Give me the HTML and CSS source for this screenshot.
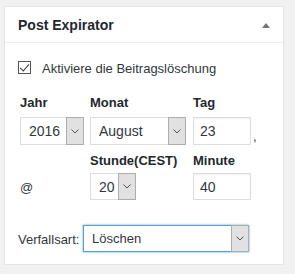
FILE: index.html
```html
<!DOCTYPE html>
<html lang="de">
<head>
  <meta charset="UTF-8" />
  <title>Post Expirator</title>
  <link rel="stylesheet" href="styles.css">
</head>
<body>

  <div class="postbox">
    <div class="hndle">
      <h2>Post Expirator</h2>
      <span class="toggle"></span>
    </div>

    <div class="inside">
      <label class="check-row">
        <input type="checkbox" checked />
        <span>Aktiviere die Beitragslöschung</span>
      </label>

      <div class="dates">
        <div class="th">Jahr</div>
        <div class="th">Monat</div>
        <div class="th">Tag</div>
        <div></div>

        <div class="select w-year">
          <span class="value">2016</span>
          <span class="caret"><svg width="8" height="5" viewBox="0 0 8 5"><path d="M0.5 0.5 L4 4 L7.5 0.5" fill="none" stroke="#555" stroke-width="1"/></svg></span>
        </div>
        <div class="select w-month">
          <span class="value">August</span>
          <span class="caret"><svg width="8" height="5" viewBox="0 0 8 5"><path d="M0.5 0.5 L4 4 L7.5 0.5" fill="none" stroke="#555" stroke-width="1"/></svg></span>
        </div>
        <input class="text" type="text" value="23" spellcheck="false" />
        <div class="comma">,</div>

        <div></div>
        <div class="th th-2">Stunde(CEST)</div>
        <div class="th th-2">Minute</div>
        <div></div>

        <div class="at">@</div>
        <div class="select w-hour row-4">
          <span class="value">20</span>
          <span class="caret"><svg width="8" height="5" viewBox="0 0 8 5"><path d="M0.5 0.5 L4 4 L7.5 0.5" fill="none" stroke="#555" stroke-width="1"/></svg></span>
        </div>
        <input class="text row-4" type="text" value="40" spellcheck="false" />
        <div></div>
      </div>

      <div class="type-row">
        <span class="type-label">Verfallsart:</span>
        <div class="select w-type focus">
          <span class="value">Löschen</span>
          <span class="caret"><svg width="8" height="5" viewBox="0 0 8 5"><path d="M0.5 0.5 L4 4 L7.5 0.5" fill="none" stroke="#555" stroke-width="1"/></svg></span>
        </div>
      </div>
    </div>
  </div>

</body>
</html>
```

FILE: styles.css
```css
body {
  margin: 0;
  padding: 6px 0 0 4px;
  background: #f1f1f1;
  font-family: "Liberation Sans", Arial, sans-serif;
  font-size: 13px;
  color: #23282d;
}

.postbox {
  width: 278px;
  background: #fff;
  border: 1px solid #e5e5e5;
  box-shadow: 0 1px 1px rgba(0,0,0,0.04);
}

.hndle {
  display: flex;
  align-items: center;
  justify-content: space-between;
  height: 35px;
  padding: 0 13px 0 13px;
  border-bottom: 1px solid #eee;
}

.hndle h2 {
  margin: 0;
  font-size: 14px;
  font-weight: bold;
  line-height: 35px;
  padding-top: 1px;
}

.toggle {
  width: 0;
  height: 0;
  margin-top: 1px;
  border-left: 4px solid transparent;
  border-right: 4px solid transparent;
  border-bottom: 5px solid #72777c;
}

.inside {
  padding: 18px 0 12px 13px;
}

.check-row {
  display: flex;
  align-items: center;
  height: 13px;
}

.check-row input {
  appearance: none;
  margin: 0 11px 0 0;
  width: 13px;
  height: 13px;
  border: 1px solid #555;
  background: #fff;
  position: relative;
}

.check-row input:checked::after {
  content: "";
  position: absolute;
  left: 3px;
  top: 0px;
  width: 4px;
  height: 8px;
  border-right: 1px solid #333;
  border-bottom: 1px solid #333;
  transform: rotate(40deg);
}

.check-row span {
  line-height: 13px;
  padding-top: 2px;
  color: #32373c;
}

.dates {
  display: grid;
  grid-template-columns: 64px 97px 58px auto;
  column-gap: 6px;
  margin: 21px 0 0 2px;
}

.th {
  font-weight: bold;
  line-height: 16px;
  margin-bottom: 6px;
}

.th-2 {
  margin-top: 8px;
  margin-bottom: 4px;
}

.select {
  position: relative;
  box-sizing: border-box;
  height: 28px;
  border: 1px solid #ddd;
  background: #fff;
  display: flex;
  align-items: center;
  font-size: 14px;
  color: #32373c;
}

.select .value {
  padding-left: 8px;
}

.caret {
  position: absolute;
  top: -1px;
  right: -1px;
  bottom: -1px;
  width: 18px;
  box-sizing: border-box;
  background: #e1e1e1;
  border: 1px solid #adadad;
  display: flex;
  align-items: center;
  justify-content: center;
}

.w-year { width: 64px; }
.w-month { width: 96px; }
.w-hour { width: 46px; height: 27px; }

.text {
  box-sizing: border-box;
  width: 58px;
  height: 28px;
  margin: 0;
  padding: 0 6px;
  border: 1px solid #ddd;
  box-shadow: inset 0 1px 2px rgba(0,0,0,0.07);
  font-family: inherit;
  font-size: 14px;
  color: #32373c;
  outline: none;
}

.row-4 { height: 27px; }

.comma {
  align-self: end;
  margin-left: -4px;
  line-height: 16px;
  color: #32373c;
}

.at {
  align-self: center;
  padding-top: 2px;
  color: #32373c;
}

.type-row {
  display: flex;
  align-items: center;
  margin-top: 25px;
}

.type-label {
  width: 65px;
  padding-top: 1px;
  color: #32373c;
}

.w-type {
  width: 166px;
  height: 27px;
  font-size: 13px;
}

.focus {
  border-color: #5b9dd9;
  box-shadow: 0 0 2px rgba(30,140,190,0.8);
}
```
